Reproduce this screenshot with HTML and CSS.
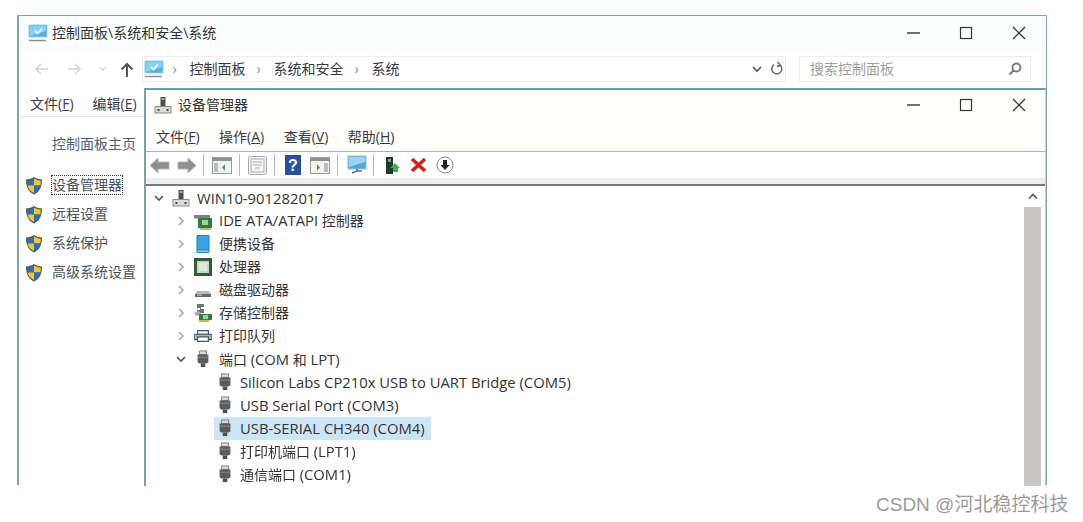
FILE: index.html
```html
<!DOCTYPE html>
<html lang="zh-CN">
<head>
<meta charset="utf-8">
<title>设备管理器</title>
<link rel="stylesheet" href="styles.css">
</head>
<body>
<svg class="defs" width="0" height="0" aria-hidden="true">
  <symbol id="monitor" viewBox="0 0 20 18">
    <rect x="1" y="1" width="18" height="12" fill="#4db4ea" stroke="#9ccbe6"/>
    <path d="M2 2h16v5L2 12z" fill="#86d2f5"/>
    <path d="M7 7l2.500 2.500L14 4.500" fill="none" stroke="#fff" stroke-width="1.600"/>
    <path d="M1 16.500h17" stroke="#7f8d99" stroke-width="1.400"/>
  </symbol>
  <symbol id="devmgr" viewBox="0 0 18 18">
    <rect x="6.500" y="1" width="5" height="9" fill="#4a4f4a"/>
    <rect x="7.500" y="2" width="3" height="2" fill="#9aa"/>
    <rect x="1" y="10.500" width="16" height="6.500" fill="#dcdcd6" stroke="#8a8a86"/>
    <rect x="3.500" y="13" width="2" height="2" fill="#444"/>
    <rect x="12.500" y="13" width="2" height="2" fill="#444"/>
  </symbol>
  <symbol id="shield" viewBox="0 0 18 19">
    <path d="M9 1c2 1.500 5 2.500 8 2.500 0 7-2 12-8 15-6-3-8-8-8-15C4 3.500 7 2.500 9 1z" fill="#5a5548"/>
    <path d="M9 2.500V9.500H2.600C2.400 8 2.300 6.500 2.300 4.700 4.600 4.500 7 3.700 9 2.500z" fill="#2a6fc0"/>
    <path d="M9 2.500c2 1.200 4.400 2 6.700 2.200 0 1.800-.1 3.300-.3 4.800H9z" fill="#f2c832"/>
    <path d="M2.600 9.500H9V17C5.200 15 3.300 12.700 2.600 9.500z" fill="#f2c832"/>
    <path d="M9 9.500h6.400C14.700 12.700 12.800 15 9 17z" fill="#2a6fc0"/>
  </symbol>
  <symbol id="port" viewBox="0 0 18 20">
    <path d="M5 1h8v4H5z" fill="#d7d7d7" stroke="#777"/>
    <path d="M3 5h12v8.500L13 15H5l-2-1.500z" fill="#585c60"/>
    <path d="M3 8h12" stroke="#8b8f92"/>
    <path d="M6.500 15h5v4h-5z" fill="#4a4d50"/>
  </symbol>
  <symbol id="ide" viewBox="0 0 18 18">
    <path d="M0 3h16v3.500H0z" fill="#7d8285"/>
    <path d="M4 6h14v10H4z" fill="#2f7d44"/>
    <path d="M8 8h6v5H8z" fill="#a2d48e"/>
    <path d="M6 16h11v2H6z" fill="#c9b56a"/>
  </symbol>
  <symbol id="tablet" viewBox="0 0 18 18">
    <rect x="2.500" y="0" width="13" height="18" rx="1" fill="#1e7fc4"/>
    <rect x="3.500" y="1" width="11" height="13.500" fill="#3ba4e0"/>
    <rect x="3.500" y="15.500" width="11" height="1.500" fill="#b5c8d4"/>
  </symbol>
  <symbol id="cpu" viewBox="0 0 18 18">
    <rect x="0" y="0" width="18" height="18" fill="#2f5e3c"/>
    <rect x="3" y="3" width="12" height="12" fill="#c7d8c4"/>
    <rect x="5" y="5" width="8" height="8" fill="#dfe8da"/>
  </symbol>
  <symbol id="disk" viewBox="0 0 18 18">
    <path d="M3 10h12l2 3v3H1v-3z" fill="#b8b8b4"/>
    <path d="M1 13h16v3H1z" fill="#62666a"/>
    <path d="M3 14h5" stroke="#d5d5d5"/>
  </symbol>
  <symbol id="storage" viewBox="0 0 18 18">
    <path d="M3 0h7v3H7v2h3v4H3V6h3V4H3z" fill="#6d7275"/>
    <path d="M0 9l5-2 2 3-5 2z" fill="#a8aaa6"/>
    <path d="M5 10h13v6H5z" fill="#2f7d44"/>
    <path d="M9 11h5v4H9z" fill="#a2d48e"/>
    <path d="M5 16h10v2H5z" fill="#c9b56a"/>
  </symbol>
  <symbol id="printer" viewBox="0 0 20 18">
    <path d="M4 3h12v4H4z" fill="#fff" stroke="#47535c" stroke-width="1.200"/>
    <path d="M0 7h20v6H0z" fill="#8fb9d4" stroke="#47535c" stroke-width="1.200"/>
    <path d="M4 10h12v5H4z" fill="#fff" stroke="#47535c" stroke-width="1.200"/>
  </symbol>
  <symbol id="chev-r" viewBox="0 0 12 12"><path d="M4 2l4 4-4 4" fill="none" stroke="#a6a6a6" stroke-width="1.500"/></symbol>
  <symbol id="chev-d" viewBox="0 0 12 12"><path d="M2 4l4 4 4-4" fill="none" stroke="#555" stroke-width="1.600"/></symbol>
  <symbol id="min" viewBox="0 0 14 14"><path d="M1 7h13" stroke="#222" stroke-width="1.300"/></symbol>
  <symbol id="max" viewBox="0 0 14 14"><rect x="1.500" y="1.500" width="11" height="11" fill="none" stroke="#333" stroke-width="1.200"/></symbol>
  <symbol id="close" viewBox="0 0 14 14"><path d="M1 1l12 12M13 1L1 13" stroke="#333" stroke-width="1.200"/></symbol>
</svg>

<section class="window outer">
  <header class="titlebar outer-title">
    <svg class="ti-ic"><use href="#monitor"/></svg>
    <span class="title">控制面板\系统和安全\系统</span>
    <div class="caption">
      <svg><use href="#min"/></svg><svg><use href="#max"/></svg><svg><use href="#close"/></svg>
    </div>
  </header>
  <nav class="navbar">
    <div class="nav-btns">
      <svg width="16" height="14" viewBox="0 0 16 14"><path d="M15 7H3M8 2L3 7l5 5" fill="none" stroke="#d4d4d4" stroke-width="1.600"/></svg>
      <svg width="16" height="14" viewBox="0 0 16 14"><path d="M1 7h12M8 2l5 5-5 5" fill="none" stroke="#d4d4d4" stroke-width="1.600"/></svg>
      <svg width="8" height="6" viewBox="0 0 8 6"><path d="M1 1l3 3 3-3" fill="none" stroke="#d4d4d4" stroke-width="1.300"/></svg>
      <svg width="14" height="15" viewBox="0 0 14 15"><path d="M7 15V2M1.500 7.500L7 2l5.500 5.500" fill="none" stroke="#555" stroke-width="2"/></svg>
    </div>
    <div class="address">
      <svg class="addr-ic"><use href="#monitor"/></svg>
      <span class="crumb-sep">›</span><span>控制面板</span>
      <span class="crumb-sep">›</span><span>系统和安全</span>
      <span class="crumb-sep">›</span><span>系统</span>
      <svg class="addr-drop" width="12" height="12"><use href="#chev-d"/></svg>
      <svg class="addr-refresh" width="14" height="14" viewBox="0 0 14 14"><path d="M10.500 3.500A5 5 0 1 1 4 2.700M7.500 0L10.500 3.300 6.800 4.500" fill="none" stroke="#666" stroke-width="1.500"/></svg>
    </div>
    <div class="search">
      <span>搜索控制面板</span>
      <svg width="14" height="14" viewBox="0 0 14 14"><circle cx="8.500" cy="5.500" r="4" fill="none" stroke="#777" stroke-width="1.800"/><path d="M5.500 8.500L1.500 12.500" stroke="#777" stroke-width="2.200"/></svg>
    </div>
  </nav>
  <div class="menubar outer-menu"><span>文件(<u>F</u>)</span><span>编辑(<u>E</u>)</span></div>
  <aside class="sidebar">
    <p class="side-home">控制面板主页</p>
    <ul class="side-links">
      <li><svg><use href="#shield"/></svg><span class="focused">设备管理器</span></li>
      <li><svg><use href="#shield"/></svg><span>远程设置</span></li>
      <li><svg><use href="#shield"/></svg><span>系统保护</span></li>
      <li><svg><use href="#shield"/></svg><span>高级系统设置</span></li>
    </ul>
  </aside>

  <section class="window inner">
    <header class="titlebar inner-title">
      <svg class="ti-ic small"><use href="#devmgr"/></svg>
      <span class="title">设备管理器</span>
      <div class="caption">
        <svg><use href="#min"/></svg><svg><use href="#max"/></svg><svg><use href="#close"/></svg>
      </div>
    </header>
    <div class="menubar inner-menu"><span>文件(<u>F</u>)</span><span>操作(<u>A</u>)</span><span>查看(<u>V</u>)</span><span>帮助(<u>H</u>)</span></div>
    <div class="toolbar">
      <svg width="21" height="17" viewBox="0 0 21 17"><path d="M1 8.500l8-7.500v4h11v7H9v4z" fill="#8d8f8d" stroke="#b5b5b5"/></svg>
      <svg width="20" height="17" viewBox="0 0 20 17"><path d="M19 8.500l-8-7.500v4H1v7h10v4z" fill="#8d8f8d" stroke="#b5b5b5"/></svg>
      <i class="sep mln1"></i>
      <svg width="20" height="17" viewBox="0 0 20 17"><rect x=".5" y=".5" width="19" height="16" fill="#f2f2ee" stroke="#999"/><path d="M1 1h18v3H1z" fill="#8c9296"/><path d="M2 6h4v9H2z" fill="#b9bdbb"/><path d="M13 7l-3 3.500 3 3.500z" fill="#4f9b5e"/></svg>
      <i class="sep"></i>
      <svg width="19" height="19" viewBox="0 0 19 19"><rect x=".5" y=".5" width="18" height="18" rx="2" fill="#f4f4f2" stroke="#aaa"/><rect x="3" y="3" width="13" height="13" fill="none" stroke="#b0b0b0"/><path d="M5 6h9M5 9h9M7 12h5" stroke="#b0b0b0"/></svg>
      <i class="sep"></i>
      <svg class="ml2" width="16" height="20" viewBox="0 0 16 20"><rect width="16" height="20" fill="#2a4ea0"/><text class="help-q" x="8" y="16">?</text></svg>
      <svg class="ml2" width="20" height="17" viewBox="0 0 20 17"><rect x=".5" y=".5" width="19" height="16" fill="#f2f2ee" stroke="#999"/><path d="M1 1h18v3H1z" fill="#8c9296"/><path d="M14 6h4v9h-4z" fill="#b9bdbb"/><path d="M7 7l3 3.500-3 3.500z" fill="#4f9b5e"/></svg>
      <i class="sep"></i>
      <svg class="ml1" width="20" height="20" viewBox="0 0 20 20"><rect x="1" y="1" width="18" height="13" fill="#4da8dc" stroke="#8fc3e0"/><path d="M2 2h16v5L2 12z" fill="#9ad6f2"/><path d="M10 14v2M5 18l5-2 5 0" fill="none" stroke="#5f6d78" stroke-width="1.500"/></svg>
      <i class="sep mln1"></i>
      <svg class="ml3" width="16" height="19" viewBox="0 0 16 19"><rect x="1" y="1" width="7" height="17" fill="#24352a"/><rect x="3" y="3" width="3" height="3" fill="#6a9"/><path d="M10 7l5 5h-2v4H8v-4H5z" fill="#3fae58"/></svg>
      <svg class="ml2" width="17" height="16" viewBox="0 0 17 16"><path d="M2 2l13 12M15 2L2 14" stroke="#d3211f" stroke-width="3.600"/></svg>
      <svg class="ml2" width="18" height="18" viewBox="0 0 18 18"><circle cx="9" cy="9" r="8" fill="#fff" stroke="#888"/><path d="M7 4h4v5h2.500L9 14 4.500 9H7z" fill="#222"/></svg>
    </div>
    <div class="toolstrip"></div>
    <div class="client">
      <ul class="tree">
        <li class="row l0"><svg class="chev"><use href="#chev-d"/></svg><svg class="ic"><use href="#devmgr"/></svg><span class="lat">WIN10-901282017</span></li>
        <li class="row l1"><svg class="chev"><use href="#chev-r"/></svg><svg class="ic"><use href="#ide"/></svg><span><span class="lat">IDE ATA/ATAPI</span> 控制器</span></li>
        <li class="row l1"><svg class="chev"><use href="#chev-r"/></svg><svg class="ic"><use href="#tablet"/></svg><span>便携设备</span></li>
        <li class="row l1"><svg class="chev"><use href="#chev-r"/></svg><svg class="ic"><use href="#cpu"/></svg><span>处理器</span></li>
        <li class="row l1"><svg class="chev"><use href="#chev-r"/></svg><svg class="ic"><use href="#disk"/></svg><span>磁盘驱动器</span></li>
        <li class="row l1"><svg class="chev"><use href="#chev-r"/></svg><svg class="ic"><use href="#storage"/></svg><span>存储控制器</span></li>
        <li class="row l1"><svg class="chev"><use href="#chev-r"/></svg><svg class="ic"><use href="#printer"/></svg><span>打印队列</span></li>
        <li class="row l1"><svg class="chev"><use href="#chev-d"/></svg><svg class="ic"><use href="#port"/></svg><span>端口 <span class="lat">(COM</span> 和 <span class="lat">LPT)</span></span></li>
        <li class="row l2"><div class="item"><svg class="ic"><use href="#port"/></svg><span class="lat">Silicon Labs CP210x USB to UART Bridge (COM5)</span></div></li>
        <li class="row l2"><div class="item"><svg class="ic"><use href="#port"/></svg><span class="lat">USB Serial Port (COM3)</span></div></li>
        <li class="row l2"><div class="item selected"><svg class="ic"><use href="#port"/></svg><span class="lat">USB-SERIAL CH340 (COM4)</span></div></li>
        <li class="row l2"><div class="item"><svg class="ic"><use href="#port"/></svg><span>打印机端口 <span class="lat">(LPT1)</span></span></div></li>
        <li class="row l2"><div class="item"><svg class="ic"><use href="#port"/></svg><span>通信端口 <span class="lat">(COM1)</span></span></div></li>
      </ul>
      <div class="scrollbar">
        <div class="scroll-up"><svg width="10" height="7" viewBox="0 0 10 7"><path d="M1 5.500l4-4 4 4" fill="none" stroke="#555" stroke-width="1.600"/></svg></div>
        <div class="thumb"></div>
      </div>
    </div>
  </section>
</section>

<footer class="watermark">CSDN @河北稳控科技</footer>
</body>
</html>
```
FILE: styles.css
```css
* { box-sizing: border-box; }
html, body { margin: 0; height: 100%; }
body {
  position: relative;
  width: 1083px;
  height: 522px;
  overflow: hidden;
  background: #fff;
  color: #3a3a3a;
  font: 14px/20px "Open Sans", "Noto Sans CJK SC", sans-serif;
}
.defs { position: absolute; }
ul { list-style: none; margin: 0; padding: 0; }
p { margin: 0; }
u { text-decoration: underline; text-underline-offset: 1px; }
svg { display: block; flex: none; }

.window { position: absolute; background: #fff; }
.outer {
  left: 17px;
  top: 15px;
  width: 1030px;
  height: 470px;
  border: 1px solid #7fa5b0;
  border-bottom: 0;
  border-left-width: 2px;
  filter: blur(.35px);
}
.inner {
  left: 125px;
  top: 72px;
  width: 902px;
  height: 398px;
  border-top: 2px solid #6f9da8;
  border-left: 2px solid #7e9fae;
  border-right: 1px solid #a9d6e8;
  display: flex;
  flex-direction: column;
}

.titlebar { display: flex; align-items: center; }
.title { color: #333; }
.outer-title { height: 34px; padding-left: 9px; background: #fbfefe; }
.inner-title { height: 30px; padding-left: 8px; background: #fffffb; }
.ti-ic { width: 20px; height: 18px; margin-right: 4px; }
.ti-ic.small { width: 18px; height: 18px; margin-right: 6px; }
.caption { margin-left: auto; display: flex; gap: 39px; padding-right: 20px; }
.caption svg { width: 14px; height: 14px; }
.inner-title .caption { padding-right: 19px; }

.navbar { height: 26px; margin-top: 6px; display: flex; align-items: center; }
.nav-btns { width: 123px; padding-left: 14px; display: flex; align-items: center; gap: 18px; }
.nav-btns svg:nth-child(3) { margin-left: -2px; }
.nav-btns svg:nth-child(4) { margin-left: -5px; }
.address {
  width: 644px;
  height: 26px;
  padding-left: 1px;
  display: flex;
  align-items: center;
  gap: 11px;
  border: 1px solid #ededed;
}
.addr-ic { width: 20px; height: 18px; margin-right: -2.5px; }
.crumb-sep { color: #888; width: 6px; }
.addr-drop { margin-left: auto; margin-right: -4px; }
.addr-refresh { margin-right: 1px; }
.search {
  margin-left: 13px;
  width: 232px;
  height: 26px;
  padding: 0 8px 0 10px;
  display: flex;
  align-items: center;
  justify-content: space-between;
  border: 1px solid #ededed;
  color: #a0a0a0;
}

.menubar { display: flex; }
.outer-menu {
  margin-top: 12px;
  height: 23px;
  width: 125px;
  padding-left: 11px;
  gap: 19px;
  border-bottom: 1px solid #e4e4e4;
}
.inner-menu {
  height: 32px;
  padding: 7px 0 0 10px;
  gap: 19.5px;
  border-bottom: 1px solid #b0b0b0;
  background: #fffffb;
}

.sidebar { width: 125px; }
.side-home { padding: 17px 0 0 33px; color: #50606e; white-space: nowrap; }
.side-links { margin-top: 21px; padding-left: 6px; display: flex; flex-direction: column; gap: 9px; }
.side-links li { display: flex; align-items: center; gap: 9px; white-space: nowrap; color: #45535f; }
.side-links svg { width: 18px; height: 19px; }
.focused { outline: 1px dotted #333; outline-offset: -1px; padding: 0 1px; margin-left: -1px; }

.toolbar { height: 26px; padding-left: 3px; display: flex; align-items: center; gap: 7px; }
.sep { width: 1px; height: 22px; margin-right: 1px; background: #b8b8b8; }
.ml1 { margin-left: 1px; }
.ml2 { margin-left: 2px; }
.ml3 { margin-left: 3px; }
.mln1 { margin-left: -1px; }
.help-q { fill: #fff; font: bold 16px "Liberation Sans", sans-serif; text-anchor: middle; }
.toolstrip { height: 8px; background: #ededed; border-bottom: 2px solid #777; }

.client { flex: 1; min-height: 0; display: flex; }
.tree { flex: 1; }
.row { height: 23.08px; display: flex; align-items: center; white-space: nowrap; color: #333; }
.lat { font-size: 14.8px; }
.chev { width: 12px; height: 12px; margin-right: 7px; }
.ic { width: 18px; height: 18px; margin-right: 7px; }
.l0 { padding-left: 7px; }
.l1 { padding-left: 29px; }
.l2 { padding-left: 68px; }
.item { height: 23px; padding: 0 6px 0 2px; display: flex; align-items: center; }
.item .ic { margin-right: 6px; }
.selected { background: #cde6f7; }
.scrollbar { width: 17px; margin-right: 4px; display: flex; flex-direction: column; }
.scroll-up { height: 21px; display: flex; align-items: center; justify-content: center; }
.thumb { flex: 1; background: #c9c7c5; }

.watermark {
  position: absolute;
  left: 876px;
  top: 493px;
  color: #9a9a9a;
  font: 19px/24px "Liberation Sans", "Noto Sans CJK SC", sans-serif;
  white-space: nowrap;
}
```
